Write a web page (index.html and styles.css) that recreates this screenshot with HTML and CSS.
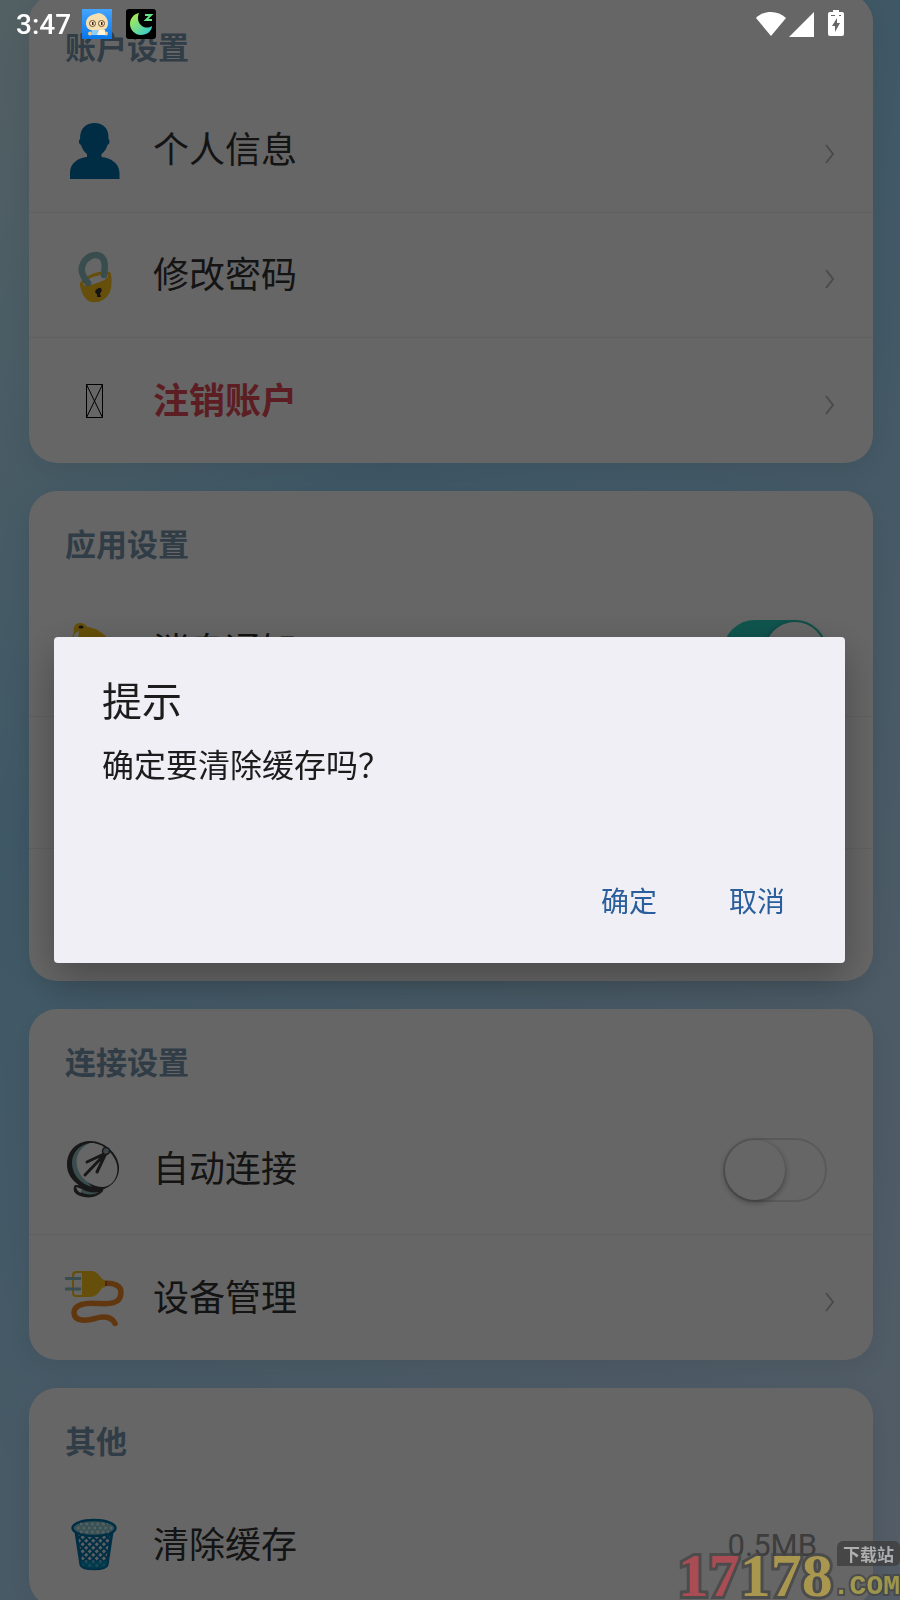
FILE: index.html
```html
<!DOCTYPE html>
<html lang="zh-CN">
<head>
    <meta charset="UTF-8">
    <meta name="viewport" content="width=device-width, initial-scale=1.0">
    <title>设置</title>
    <link rel="stylesheet" href="styles.css">
</head>
<body>
    <main class="page">
        <section class="card">
            <h2 class="card-title">账户设置</h2>
            <a class="row" href="#">
                <svg class="icon" viewBox="0 0 60 60">
                    <path fill="#006eaa" d="M5 58v-6c0-10 8-15 17-16v-3c-3-2-5-6-6-9-2-1-3-4-1-6C15 7 21 2 29.500 2S44 7 43.500 18c2 2 1 5-1 6-1 3-3 7-6 9v3c9 1 18 6 18 16v6z"/>
                </svg>
                <span class="label">个人信息</span>
                <svg class="chevron" viewBox="0 0 12 20"><path d="M1 1l7 9-7 9"/></svg>
            </a>
            <a class="row" href="#">
                <svg class="icon" viewBox="0 0 60 60">
                    <g transform="translate(0 3)">
                        <path fill="#ffc51a" d="M15 37c-1-4 3-8 12-12 9-3 18-4 19 0 1 7 1 14-2 20-4 6-10 9-18 8-6-1-9-9-11-16z"/>
                        <path fill="#ffffff" d="M18 35c3-4 8-7 14-8 5-2 10-2 11-1 1 3-5 6-11 8s-12 4-14 1z"/>
                        <path fill="none" stroke="#90bec4" stroke-width="6.500" stroke-linecap="round" d="M23 34c-5-6-8-13-5-19 3-7 11-11 17-8 6 3 5 11 4 19"/>
                        <path fill="#333333" d="M34 39c3-1 4 4 1 5l1 4h-4v-3c-3-1-2-5 2-6z"/>
                    </g>
                </svg>
                <span class="label">修改密码</span>
                <svg class="chevron" viewBox="0 0 12 20"><path d="M1 1l7 9-7 9"/></svg>
            </a>
            <a class="row" href="#">
                <svg class="icon" viewBox="0 0 60 60">
                    <path fill="none" stroke="#000000" stroke-width="1" d="M21.500 12.500h16v33h-16zl16 33m0-33l-16 33"/>
                </svg>
                <span class="label danger">注销账户</span>
                <svg class="chevron" viewBox="0 0 12 20"><path d="M1 1l7 9-7 9"/></svg>
            </a>
        </section>

        <section class="card">
            <h2 class="card-title">应用设置</h2>
            <div class="row tall">
                <svg class="icon" viewBox="0 0 60 60">
                    <path fill="#ffc51a" d="M9 10c-1-5 1-9 6-9 4 0 6 2 7 4 14 1 27 14 30 30L17 55c-8-10-14-29-8-45z"/>
                    <path fill="#ffffff" d="M8 17c1-5 3-7 6-8-2 10 0 20 5 32h-5c-5-7-7-17-6-24z"/>
                    <ellipse cx="16" cy="5" rx="2.500" ry="1.500" fill="#333333"/>
                </svg>
                <label class="label" for="notify">消息通知</label>
                <input class="switch" type="checkbox" id="notify" checked>
            </div>
            <div class="row tall"></div>
            <div class="row tall"></div>
        </section>

        <section class="card">
            <h2 class="card-title">连接设置</h2>
            <div class="row tall">
                <svg class="icon" viewBox="0 0 60 60">
                    <path fill="#3c3c3c" d="M10 45c-3 4-1 9 5 11 9 3 18 1 23-5l1-5z"/>
                    <path fill="#90bec4" d="M17 49c4 3 11 4 17 3l-4 2c-6 1-11 0-14-2z"/>
                    <path fill="#ffffff" d="M11 47c1 3 2 5 5 6l1-4z"/>
                    <path fill="#3c3c3c" d="M24 1C10 2 2 12 2 25c0 15 16 27 34 25 12-3 19-13 18-24C53 13 38 0 24 1z"/>
                    <path fill="#90bec4" d="M25 3C14 5 7 13 7 23c0 11 8 21 20 24-10-10-12-33-2-44z"/>
                    <path fill="#ffffff" d="M25 3C13 8 9 19 13 30c4 10 14 17 25 17 10-1 16-11 14-22C49 12 36 2 25 3z"/>
                    <path fill="none" stroke="#3c3c3c" stroke-width="3" stroke-linecap="round" d="M41 13L22 22M41 13L20 35M41 13l-9 19"/>
                    <circle cx="41" cy="11" r="3.500" fill="#96b0bd" stroke="#3c3c3c" stroke-width="1.500"/>
                </svg>
                <label class="label" for="autoConnect">自动连接</label>
                <input class="switch" type="checkbox" id="autoConnect">
            </div>
            <a class="row" href="#">
                <svg class="icon" viewBox="0 0 60 60">
                    <path fill="none" stroke="#f08a24" stroke-width="5.500" stroke-linecap="round" d="M39 14.500c10-1 17 2 17 9 0 14-17 11-25 11-10-1-22 1-22 9 0 10 14 8 21 6 8-3 17-2 20 5"/>
                    <path fill="#d05a20" d="M37 12h5v5h-5z"/>
                    <path fill="#ffc51a" d="M11 2h15c6 0 9 5 11 8l3 1v7l-3 1c-3 5-7 9-12 9H11c-3 0-4-2-4-4V6c0-3 2-4 4-4z"/>
                    <path fill="#ffffff" d="M11 4h6v22h-6c-2 0-2-1-2-3V6z"/>
                    <path stroke="#90bec4" stroke-width="3" d="M0 9.500h16M0 20h16"/>
                </svg>
                <span class="label">设备管理</span>
                <svg class="chevron" viewBox="0 0 12 20"><path d="M1 1l7 9-7 9"/></svg>
            </a>
        </section>

        <section class="card">
            <h2 class="card-title">其他</h2>
            <a class="row" href="#">
                <svg class="icon" viewBox="0 0 60 60">
                    <defs>
                        <pattern id="mesh" width="5" height="5" patternUnits="userSpaceOnUse" patternTransform="rotate(45)">
                            <path fill="#0074ac" d="M0 0h5v5H0z"/>
                            <path fill="#e4eef2" d="M1 1h3v3H1z"/>
                        </pattern>
                    </defs>
                    <path fill="url(#mesh)" stroke="#0074ac" stroke-width="3" d="M11 16l5 33c1 5 25 5 26 0l5-33z"/>
                    <path fill="#009ac8" fill-opacity=".7" d="M15.500 45h27l-1 5c-4 3-21 3-25 0z"/>
                    <ellipse cx="29" cy="12" rx="21.500" ry="8" fill="#90ccd4" stroke="#0074ac" stroke-width="2.500"/>
                    <path fill="none" stroke="#dcf2f5" stroke-width="2.500" stroke-dasharray="2.500 3" d="M15 8h28M12 12h35M15 16h29"/>
                </svg>
                <span class="label">清除缓存</span>
                <span class="value">0.5MB</span>
            </a>
        </section>
    </main>

    <div class="overlay">
        <div class="modal" role="dialog" aria-labelledby="modalTitle">
            <h3 class="modal-title" id="modalTitle">提示</h3>
            <p class="modal-text">确定要清除缓存吗？</p>
            <div class="modal-actions">
                <button class="modal-btn" type="button">确定</button>
                <button class="modal-btn" type="button">取消</button>
            </div>
        </div>
    </div>

    <header class="status-bar">
        <span class="time">3:47</span>
        <svg class="app-icon" viewBox="0 0 30 30">
            <defs>
                <linearGradient id="sky" x1="0" y1="0" x2="0" y2="1">
                    <stop offset="0" stop-color="#45a4ff"/>
                    <stop offset="1" stop-color="#0878ec"/>
                </linearGradient>
            </defs>
            <path fill="url(#sky)" d="M0 0h30v30H0z"/>
            <path fill="#f6dfae" d="M17 4c5 1 9 5 9 10 0 6-4 8-11 8S4 20 4 14C4 9 8 6 13 5z"/>
            <circle cx="8" cy="24.500" r="2" fill="#f3cd90"/>
            <circle cx="24" cy="24.500" r="2" fill="#f3cd90"/>
            <path fill="#8ccdf5" d="M10 21h10v5H9z"/>
            <path fill="#fff3d8" d="M17 21h6v5h-8z"/>
            <g fill="#fbe8c0" stroke="#6a4a30" stroke-width="1">
                <circle cx="10.500" cy="14.500" r="3"/>
                <circle cx="19.500" cy="14.500" r="3"/>
            </g>
            <path fill="#3a2010" d="M10 13h1.500v3H10zM19 13h1.500v3H19z"/>
        </svg>
        <svg class="app-icon" viewBox="0 0 30 30">
            <defs>
                <linearGradient id="moon" x1="0" y1="0" x2="1" y2="1">
                    <stop offset="0" stop-color="#b8f040"/>
                    <stop offset="1" stop-color="#28c8e0"/>
                </linearGradient>
            </defs>
            <rect width="30" height="30" rx="3" fill="#000000"/>
            <path fill="url(#moon)" d="M13 4C8 5 4 9 4 15c0 6 5 11 11 11s11-4 11-9c-3 2-7 2-10 0-4-3-5-8-3-13z"/>
            <path fill="none" stroke="#68e488" stroke-width="2" d="M19 6h6l-5 5h6"/>
        </svg>
        <svg class="signals" viewBox="0 0 90 30">
            <g fill="#ffffff">
                <path d="M0 9C8 1 22 1 30 9L15 27z"/>
                <path d="M33 28L58 3v25z"/>
                <path d="M77 1h6v2h3q2 0 2 2v20q0 2-2 2H74q-2 0-2-2V5q0-2 2-2h3z"/>
            </g>
            <path fill="#666666" d="M81 9l-5 8h3v6l5-9h-3zM75 6h4v1h-4zM83 6h2v1h-2z"/>
        </svg>
    </header>

    <div class="watermark">
        <span class="mark-red">17</span><span class="mark-yellow">178</span>
        <div class="mark-side">
            <span class="mark-tag">下载站</span>
            <span class="mark-com">.COM</span>
        </div>
    </div>
</body>
</html>
```
FILE: styles.css
```css
* {
    box-sizing: border-box;
}

body {
    margin: 0;
    height: 100vh;
    overflow: hidden;
    font-family: Roboto, "Noto Sans CJK SC", sans-serif;
    background: linear-gradient(135deg, #ceeff8 0%, #9edcff 34%, #d2e8ff 100%);
}

h2, h3, p {
    margin: 0;
}

/* list is scrolled slightly past the first card */
.page {
    display: flex;
    flex-direction: column;
    gap: 28px;
    margin-top: -6px;
    padding: 0 27px 0 29px;
}

.card {
    background-color: white;
    border-radius: 28px;
    box-shadow: 0 8px 30px rgba(0, 0, 0, 0.08);
}

.card-title {
    padding: 36px 36px 20px;
    font-size: 31px;
    line-height: 38px;
    font-weight: bold;
    color: #7896b0;
}

.row {
    display: flex;
    align-items: center;
    min-height: 125px;
    padding: 2px 36px 0;
    color: #333;
    text-decoration: none;
}

.row.tall {
    min-height: 132px;
}

.row:not(:last-child) {
    border-bottom: 1px solid #f0f0f0;
}

.icon {
    width: 60px;
    height: 60px;
    margin-right: 28px;
}

.label {
    flex: 1;
    font-size: 36px;
    line-height: 50px;
}

.danger {
    color: #e94b58;
    font-weight: bold;
}

.chevron {
    width: 12px;
    height: 20px;
    margin-top: 6px;
    fill: none;
    stroke: #bbb;
    stroke-width: 2;
}

.value {
    margin-right: 20px;
    font-size: 31px;
    color: #999;
}

.switch {
    appearance: none;
    display: flex;
    width: 104px;
    height: 64px;
    margin: 0 10px;
    border: 2px solid #dfdfdf;
    border-radius: 32px;
    background-color: white;
}

.switch::before {
    content: "";
    width: 60px;
    height: 60px;
    border-radius: 50%;
    background-color: white;
    box-shadow: 0 2px 6px rgba(0, 0, 0, 0.4);
}

.switch:checked {
    justify-content: flex-end;
    border-color: #2bd2c3;
    background-color: #2bd2c3;
}

.overlay {
    position: fixed;
    inset: 0;
    display: flex;
    align-items: center;
    padding: 0 55px 0 54px;
    background-color: rgba(0, 0, 0, 0.6);
}

.modal {
    flex: 1;
    padding: 42px 24px 33px 48px;
    border-radius: 4px;
    background-color: #f0eff5;
    box-shadow: 0 14px 40px rgba(0, 0, 0, 0.3);
    color: #1c1c1c;
}

.modal-title {
    font-size: 40px;
    line-height: 48px;
    font-weight: normal;
}

.modal-text {
    margin: 18px 0 83px;
    font-size: 32px;
    line-height: 42px;
}

.modal-actions {
    display: flex;
    justify-content: flex-end;
}

.modal-btn {
    height: 60px;
    padding: 0 36px;
    border: none;
    background: none;
    font-family: inherit;
    font-size: 28px;
    color: #2a5f9b;
}

.status-bar {
    position: fixed;
    top: 0;
    left: 0;
    right: 0;
    display: flex;
    align-items: center;
    height: 48px;
    padding: 0 54px 0 16px;
}

.time {
    font-size: 28px;
    font-weight: 500;
    color: white;
}

.app-icon {
    width: 30px;
    height: 30px;
    margin-left: 14px;
}

.time + .app-icon {
    margin-left: 11px;
}

.signals {
    width: 90px;
    height: 30px;
    margin-left: auto;
}

.watermark {
    position: fixed;
    right: 0;
    bottom: 0;
    display: flex;
    align-items: flex-end;
    opacity: 0.75;
    font-family: "Liberation Serif", serif;
    font-size: 62px;
    line-height: 50px;
    font-weight: bold;
    -webkit-text-stroke: 6px #444;
    paint-order: stroke fill;
}

.mark-red {
    color: #c0444e;
}

.mark-yellow {
    color: #c0a848;
}

.mark-side {
    display: flex;
    flex-direction: column;
    align-items: flex-end;
    gap: 8px;
}

.mark-tag {
    padding: 0 6px;
    border-radius: 6px 6px 6px 0;
    background-color: #3c3c3c;
    font-family: "Noto Sans CJK SC", sans-serif;
    font-size: 17px;
    line-height: 25px;
    color: #c8c8c8;
    -webkit-text-stroke: 0;
}

.mark-com {
    font-family: "Liberation Mono", monospace;
    font-size: 28px;
    line-height: 26px;
    color: #b4aa46;
    -webkit-text-stroke: 4px #444;
}
```
